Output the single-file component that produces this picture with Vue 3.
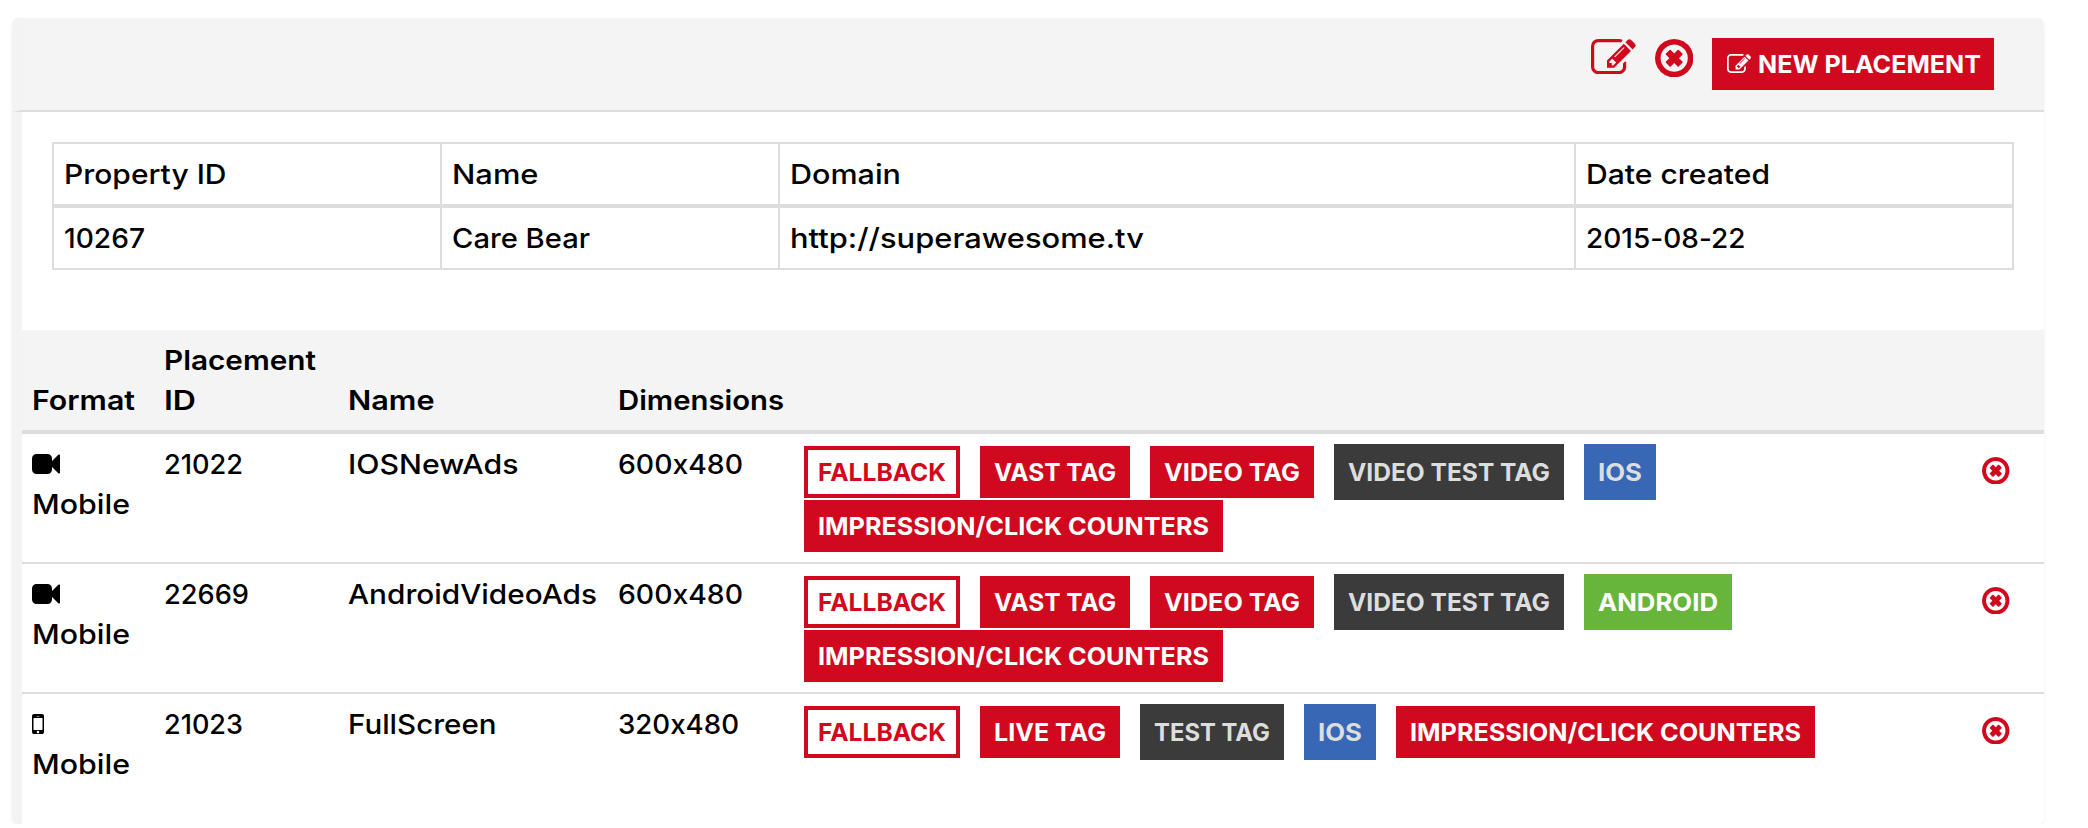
<script setup>
const icons = {
  edit: {
    box: '0 128 1792 1408',
    d: 'M888 1184l116-116-152-152-116 116v56h96v96h56zm440-720q-16-16-33 1l-350 350q-17 17-1 33t33-1l350-350q17-17 1-33zm80 594v190q0 119-84.5 203.5t-203.5 84.5h-832q-119 0-203.5-84.5t-84.5-203.5v-832q0-119 84.5-203.5t203.5-84.5h832q63 0 117 25 15 7 18 23 3 17-9 29l-49 49q-14 14-32 8-23-6-45-6h-832q-66 0-113 47t-47 113v832q0 66 47 113t113 47h832q66 0 113-47t47-113v-126q0-13 9-22l64-64q15-15 35-7t20 29zm-96-738l288 288-672 672h-288v-288zm444 132l-92 92-288-288 92-92q28-28 68-28t68 28l152 152q28 28 28 68t-28 68z'
  },
  remove: {
    box: '128 128 1536 1536',
    d: 'M1225 1079l-146 146q-10 10-23 10t-23-10l-137-137-137 137q-10 10-23 10t-23-10l-146-146q-10-10-10-23t10-23l137-137-137-137q-10-10-10-23t10-23l146-146q10-10 23-10t23 10l137 137 137-137q10-10 23-10t23 10l146 146q10 10 10 23t-10 23l-137 137 137 137q10 10 10 23t-10 23zM1440 896q0-148-73-273t-198-198-273-73-273 73-198 198-73 273 73 273 198 198 273 73 273-73 198-198 73-273zm224 0q0 209-103 385.5t-279.5 279.5-385.5 103-385.5-103-279.5-279.5-103-385.5 103-385.5 279.5-279.5 385.5-103 385.5 103 279.5 279.5 103 385.5z'
  },
  video: {
    box: '0 256 1792 1280',
    d: 'M1792 352v1088q0 42-39 59-13 5-25 5-27 0-45-19l-403-403v166q0 119-84.5 203.5t-203.5 84.5h-704q-119 0-203.5-84.5t-84.5-203.5v-704q0-119 84.5-203.5t203.5-84.5h704q119 0 203.5 84.5t84.5 203.5v165l403-402q18-19 45-19 12 0 25 5 39 17 39 59z'
  },
  phone: {
    box: '512 256 768 1280',
    d: 'M976 1408q0-33-23.5-56.5t-56.5-23.5-56.5 23.5-23.5 56.5 23.5 56.5 56.5 23.5 56.5-23.5 23.5-56.5zm208-160v-704q0-13-9.5-22.5t-22.5-9.5h-512q-13 0-22.5 9.5t-9.5 22.5v704q0 13 9.5 22.5t22.5 9.5h512q13 0 22.5-9.5t9.5-22.5zm-192-848q0-16-16-16h-160q-16 0-16 16t16 16h160q16 0 16-16zm288-16v1024q0 52-38 90t-90 38h-512q-52 0-90-38t-38-90v-1024q0-52 38-90t90-38h512q52 0 90 38t38 90z'
  }
}

// Widens (or narrows) a label's letterforms so that it takes up the given width.
const vFit = {
  mounted(el, { value }) {
    const natural = el.getBoundingClientRect().width
    el.style.width = `${value}px`
    el.style.transform = `scaleX(${value / natural})`
  }
}

const property = [
  { head: 'Property ID', headWidth: 162.5, value: '10267', width: 81 },
  { head: 'Name', headWidth: 86.5, value: 'Care Bear', width: 138 },
  { head: 'Domain', headWidth: 111, value: 'http://superawesome.tv', width: 354 },
  { head: 'Date created', headWidth: 184, value: '2015-08-22', width: 159.5 }
]

const fallback = { text: 'FALLBACK', kind: 'outline', width: 128 }
const videoTags = [
  fallback,
  { text: 'VAST TAG', kind: 'red', width: 122 },
  { text: 'VIDEO TAG', kind: 'red', width: 136 },
  { text: 'VIDEO TEST TAG', kind: 'dark', width: 202 }
]
const ios = { text: 'IOS', kind: 'blue', width: 44 }
const android = { text: 'ANDROID', kind: 'green', width: 120 }
const counters = { text: 'IMPRESSION/CLICK COUNTERS', kind: 'red', width: 391 }

const placements = [
  {
    icon: 'video', id: '21022', idWidth: 79, name: 'IOSNewAds', nameWidth: 170.5,
    size: '600x480', sizeWidth: 125, tags: [...videoTags, ios, counters]
  },
  {
    icon: 'video', id: '22669', idWidth: 85, name: 'AndroidVideoAds', nameWidth: 249,
    size: '600x480', sizeWidth: 125, tags: [...videoTags, android, counters]
  },
  {
    icon: 'phone', id: '21023', idWidth: 79, name: 'FullScreen', nameWidth: 148.5,
    size: '320x480', sizeWidth: 121,
    tags: [
      fallback,
      { text: 'LIVE TAG', kind: 'red', width: 112 },
      { text: 'TEST TAG', kind: 'dark', width: 116 },
      ios,
      counters
    ]
  }
]
</script>

<template>
  <section class="panel">
    <header class="toolbar">
      <svg class="icon edit-lg" :viewBox="icons.edit.box"><path :d="icons.edit.d" /></svg>
      <svg class="icon remove-lg" :viewBox="icons.remove.box"><path :d="icons.remove.d" /></svg>
      <button class="tag red new-placement">
        <svg class="icon edit-sm" :viewBox="icons.edit.box"><path :d="icons.edit.d" /></svg>
        <span v-fit="223" class="label">NEW PLACEMENT</span>
      </button>
    </header>

    <div class="body">
      <table class="property">
        <colgroup>
          <col class="p-id" /><col class="p-name" /><col class="p-domain" /><col class="p-date" />
        </colgroup>
        <tbody>
          <tr>
            <td v-for="c in property" :key="c.head"><span v-fit="c.headWidth" class="label">{{ c.head }}</span></td>
          </tr>
          <tr>
            <td v-for="c in property" :key="c.head"><span v-fit="c.width" class="label">{{ c.value }}</span></td>
          </tr>
        </tbody>
      </table>

      <table class="placements">
        <colgroup>
          <col class="c-format" /><col class="c-id" /><col class="c-name" /><col class="c-size" /><col /><col class="c-remove" />
        </colgroup>
        <thead>
          <tr>
            <th><span v-fit="103" class="label">Format</span></th>
            <th><span v-fit="152" class="label">Placement</span><br /><span v-fit="32" class="label">ID</span></th>
            <th><span v-fit="86.5" class="label">Name</span></th>
            <th><span v-fit="166" class="label">Dimensions</span></th>
            <th></th>
            <th></th>
          </tr>
        </thead>
        <tbody>
          <tr v-for="p in placements" :key="p.id">
            <td>
              <div class="format">
                <svg class="icon" :class="p.icon" :viewBox="icons[p.icon].box"><path :d="icons[p.icon].d" /></svg>
              </div>
              <span v-fit="98" class="label">Mobile</span>
            </td>
            <td><span v-fit="p.idWidth" class="label">{{ p.id }}</span></td>
            <td><span v-fit="p.nameWidth" class="label">{{ p.name }}</span></td>
            <td><span v-fit="p.sizeWidth" class="label">{{ p.size }}</span></td>
            <td>
              <div class="tags">
                <button v-for="t in p.tags" :key="t.text" class="tag" :class="t.kind">
                  <span v-fit="t.width" class="label">{{ t.text }}</span>
                </button>
              </div>
            </td>
            <td>
              <svg class="icon remove-sm" :viewBox="icons.remove.box"><path :d="icons.remove.d" /></svg>
            </td>
          </tr>
        </tbody>
      </table>
    </div>
  </section>
</template>

<style>
body {
  margin: 0;
  background: #fff;
}
</style>

<style scoped>
.panel {
  box-sizing: border-box;
  width: 2032px;
  height: 806px;
  margin: 18px 0 0 12px;
  border-radius: 6px;
  overflow: hidden;
  background: #fff;
  box-shadow: 0 2px 4px rgba(0, 0, 0, 0.05);
  font: 500 27.5px/40px Inter, "Open Sans", sans-serif;
  color: #000;
  display: flex;
  flex-direction: column;
}

.toolbar {
  box-sizing: border-box;
  flex: none;
  height: 94px;
  padding: 20px 50px 0 0;
  display: flex;
  justify-content: flex-end;
  align-items: flex-start;
  background: #f4f4f4;
  border-left: 10px solid #f3f3f3;
  border-bottom: 2px solid #ddd;
}

.body {
  flex: 1;
  border-left: 10px solid #f3f3f3;
}

.label {
  display: inline-block;
  flex: none;
  text-align: left;
  white-space: nowrap;
  font-feature-settings: "calt" 0;
  transform-origin: 0 50%;
}

.icon {
  display: block;
  flex: none;
  fill: #d0091e;
}

.edit-lg {
  width: 44.8px;
  height: 35.2px;
  margin: 1px 19px 0 0;
}

.remove-lg {
  width: 38.4px;
  height: 38.4px;
  margin: 1px 18.6px 0 0;
}

.edit-sm {
  width: 24px;
  height: 19px;
  margin: 0 7px 1px 1px;
  fill: #fff;
}

.tag {
  box-sizing: border-box;
  height: 52px;
  margin: 0;
  padding: 0 10px;
  display: flex;
  align-items: center;
  border: 4px solid #d0091e;
  border-radius: 0;
  background: #d0091e;
  color: #fff;
  font: 700 24.6px/44px Inter, "Open Sans", sans-serif;
}

.new-placement {
  width: 282px;
}

.outline {
  background: #fff;
  color: #d0091e;
}

.dark {
  height: 56px;
  background: #3b3b3b;
  border-color: #3b3b3b;
  color: #ddd;
}

.blue {
  height: 56px;
  background: #3767b5;
  border-color: #3767b5;
  color: #ddd;
}

.green {
  height: 56px;
  background: #68b53b;
  border-color: #68b53b;
}

.tags {
  display: flex;
  flex-wrap: wrap;
  align-items: center;
  column-gap: 20px;
}

table {
  table-layout: fixed;
  border-collapse: separate;
  border-spacing: 0;
}

th,
td {
  box-sizing: border-box;
  text-align: left;
}

.property {
  width: 1962px;
  margin: 30px 0 60px 30px;
  border-left: 2px solid #ddd;
}

.property td {
  height: 64px;
  padding: 10px;
  border: solid #ddd;
  border-width: 2px 2px 2px 0;
}

.p-id { width: 388px; }
.p-name { width: 338px; }
.p-domain { width: 796px; }
.p-date { width: 438px; }

.placements {
  width: 2022px;
}

.c-format { width: 132px; }
.c-id { width: 184px; }
.c-name { width: 270px; }
.c-size { width: 186px; }
.c-remove { width: 72px; }

.placements th {
  height: 104px;
  padding: 10px 0 10px 10px;
  vertical-align: bottom;
  font-weight: 600;
  background: #f4f4f4;
  border-bottom: 4px solid #ddd;
}

.placements td {
  height: 130px;
  padding: 10px 0 8px 10px;
  vertical-align: top;
  border-bottom: 2px solid #ddd;
}

.placements tbody tr:last-child td {
  border-bottom: 0;
}

.format {
  height: 30px;
  padding-bottom: 10px;
  display: flex;
  align-items: flex-end;
}

.format .icon {
  fill: #000;
}

.video {
  width: 28px;
  height: 20px;
}

.phone {
  width: 12px;
  height: 20px;
}

.remove-sm {
  width: 27.5px;
  height: 27.5px;
  margin-top: 12.5px;
}
</style>
